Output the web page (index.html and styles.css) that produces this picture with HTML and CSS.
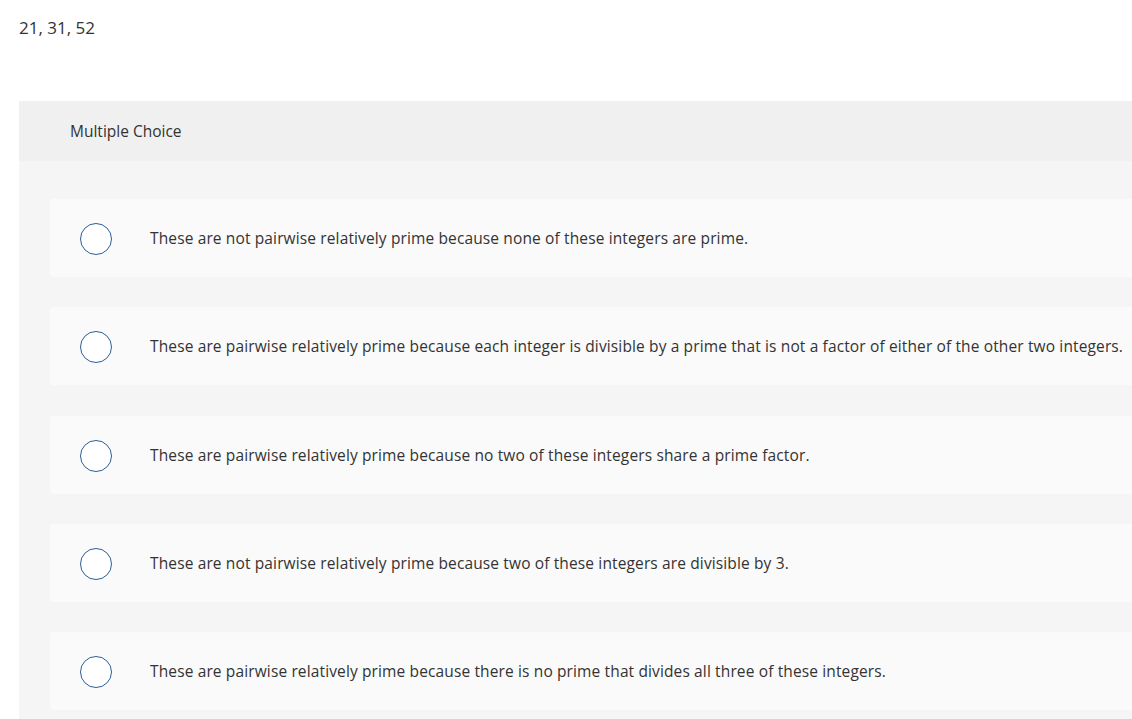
FILE: index.html
```html
<!DOCTYPE html>
<html lang="en">
<head>
    <meta charset="UTF-8">
    <meta name="viewport" content="width=device-width, initial-scale=1.0">
    <title>Multiple Choice</title>
    <link rel="stylesheet" href="styles.css">
</head>
<body>
    <p class="prompt">21, 31, 52</p>

    <div class="question">
        <div class="question-header">Multiple Choice</div>
        <div class="choices">
            <label class="choice">
                <input type="radio" name="answer">
                <span class="radio"></span>
                <span class="choice-text">These are not pairwise relatively prime because none of these integers are prime.</span>
            </label>
            <label class="choice">
                <input type="radio" name="answer">
                <span class="radio"></span>
                <span class="choice-text">These are pairwise relatively prime because each integer is divisible by a prime that is not a factor of either of the other two integers.</span>
            </label>
            <label class="choice">
                <input type="radio" name="answer">
                <span class="radio"></span>
                <span class="choice-text">These are pairwise relatively prime because no two of these integers share a prime factor.</span>
            </label>
            <label class="choice">
                <input type="radio" name="answer">
                <span class="radio"></span>
                <span class="choice-text">These are not pairwise relatively prime because two of these integers are divisible by 3.</span>
            </label>
            <label class="choice">
                <input type="radio" name="answer">
                <span class="radio"></span>
                <span class="choice-text">These are pairwise relatively prime because there is no prime that divides all three of these integers.</span>
            </label>
        </div>
    </div>
</body>
</html>
```

FILE: styles.css
```css
body {
    margin: 0;
    padding: 0 0 0 19px;
    font-family: "Open Sans", "Liberation Sans", sans-serif;
    color: #333;
    background: #fff;
    overflow: hidden;
}

.prompt {
    margin: 0;
    padding-top: 17px;
    height: 84px;
    font-size: 17px;
    line-height: 22px;
}

.question {
    background-color: #f5f5f5;
}

.question-header {
    background-color: #f0f0f0;
    height: 60px;
    padding-left: 51px;
    display: flex;
    align-items: center;
    font-size: 15.5px;
}

.choices {
    display: flex;
    flex-direction: column;
    gap: 30.25px;
    padding: 38px 0 9px 31px;
}

.choice {
    display: flex;
    align-items: center;
    height: 78px;
    padding-left: 30px;
    background-color: #fafafa;
    border-radius: 4px 0 0 4px;
    cursor: pointer;
}

.choice input {
    position: absolute;
    opacity: 0;
    width: 0;
    height: 0;
}

.radio {
    flex: none;
    width: 30px;
    height: 30px;
    border: 1.8px solid #2c5f97;
    border-radius: 50%;
    background-color: #fff;
    margin-top: 2px;
}

.choice input:checked + .radio {
    box-shadow: inset 0 0 0 6px #fff;
    background-color: #2c5f97;
}

.choice-text {
    margin-left: 38px;
    font-size: 15.5px;
    letter-spacing: 0.13px;
    white-space: nowrap;
}
```
